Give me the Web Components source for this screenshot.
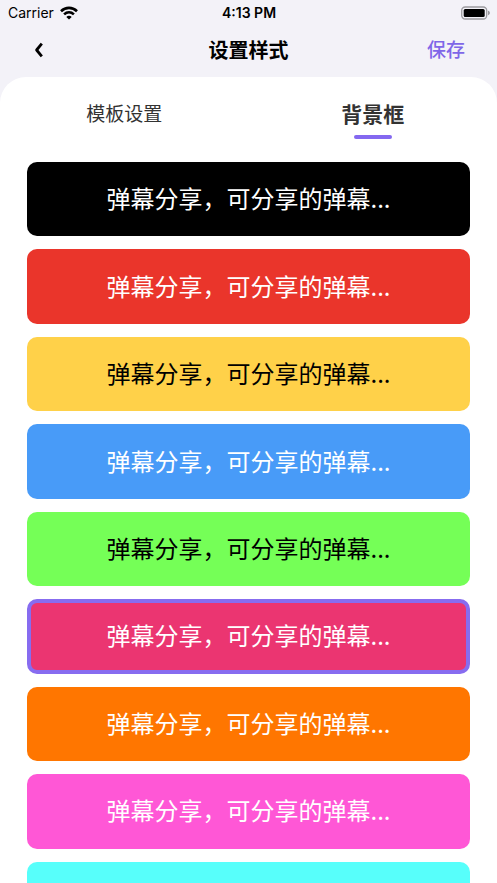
<!DOCTYPE html>
<html lang="zh-CN">
<head>
<meta charset="UTF-8">
<meta name="viewport" content="width=device-width, initial-scale=1">
<title>设置样式</title>
<style>
    body {
        margin: 0;
        background: #f3f2f8;
        font-family: Inter, "Noto Sans CJK SC", sans-serif;
    }
</style>
</head>
<body>
<style-settings></style-settings>

<script>
// Attach an open shadow root and fill it from a template
function render(host, html) {
    const template = document.createElement('template');
    template.innerHTML = html;
    host.attachShadow({ mode: 'open' }).appendChild(template.content.cloneNode(true));
}

// Carrier, clock and battery
class StatusBar extends HTMLElement {
    constructor() {
        super();
        render(this, `
            <style>
                :host {
                    display: grid;
                    grid-template-columns: 1fr auto 1fr;
                    align-items: center;
                    height: 25px;
                    padding: 0 7px 0 8px;
                    font-size: 14px;
                    color: #000;
                }

                .carrier {
                    display: flex;
                    align-items: center;
                    gap: 6px;
                }

                .time {
                    font-weight: 600;
                }

                .battery {
                    justify-self: end;
                }

                svg {
                    display: block;
                }
            </style>
            <div class="carrier">
                <span>Carrier</span>
                <svg width="18" height="14" viewBox="0 0 18 14" fill="none" stroke="#000" stroke-width="2.6" aria-hidden="true">
                    <path d="M1 5.2C5.6 .8 12.4 .8 17 5.2"/>
                    <path d="M4.1 8.4C7 5.7 11 5.7 13.9 8.4"/>
                    <path d="M9 13.6L6.3 10.9C7.8 9.5 10.2 9.5 11.7 10.9Z" fill="#000" stroke="none"/>
                </svg>
            </div>
            <div class="time">4:13 PM</div>
            <svg class="battery" width="30" height="14" viewBox="0 0 30 14" aria-hidden="true">
                <rect x="1.7" y="1" width="25" height="12" rx="3.5" fill="none" stroke="#9c9b9f" stroke-width="1.3"/>
                <rect x="3.7" y="3" width="21" height="8" rx="1.5" fill="#000"/>
                <path d="M28.2 4.8C30.2 5.4 30.2 8.6 28.2 9.2Z" fill="#858489"/>
            </svg>
        `);
    }
}

// Title bar with back and save
class NavBar extends HTMLElement {
    constructor() {
        super();
        render(this, `
            <style>
                :host {
                    display: grid;
                    grid-template-columns: 1fr auto 1fr;
                    align-items: center;
                    height: 52px;
                    padding: 0 32px;
                }

                button {
                    border: 0;
                    padding: 0;
                    background: none;
                    font: inherit;
                    cursor: pointer;
                }

                .back {
                    justify-self: start;
                }

                .save {
                    justify-self: end;
                    font-size: 19px;
                    line-height: 28px;
                    font-weight: 500;
                    color: #7f66e8;
                }

                h1 {
                    margin: 0;
                    font-size: 20px;
                    line-height: 28px;
                    font-weight: 600;
                    color: #000;
                }

                svg {
                    display: block;
                }
            </style>
            <button class="back" type="button" aria-label="返回">
                <svg width="14" height="18" viewBox="0 0 14 18" fill="none" stroke="#000" stroke-width="2.8">
                    <path d="M9.8 1.6L4.6 8L9.8 14.4" stroke-linejoin="round"/>
                </svg>
            </button>
            <h1><slot></slot></h1>
            <button class="save" type="button"><slot name="action"></slot></button>
        `);
    }
}

class TabItem extends HTMLElement {
    constructor() {
        super();
        render(this, `
            <style>
                :host {
                    display: grid;
                    flex: 1;
                }

                button {
                    display: flex;
                    flex-direction: column;
                    align-items: center;
                    border: 0;
                    padding: 21px 0 0;
                    background: none;
                    font: inherit;
                    font-size: 19px;
                    line-height: 34px;
                    color: #333;
                    cursor: pointer;
                }

                button::after {
                    content: "";
                    width: 38px;
                    height: 4px;
                    margin-top: 3px;
                    border-radius: 2px;
                }

                :host([selected]) button {
                    font-size: 21px;
                    font-weight: 600;
                }

                :host([selected]) button::after {
                    background: #8468f0;
                }
            </style>
            <button type="button"><slot></slot></button>
        `);
    }
}

// One selectable background box
class BackgroundCard extends HTMLElement {
    constructor() {
        super();
        render(this, `
            <style>
                :host {
                    display: grid;
                    flex: none;
                    aspect-ratio: 119 / 20;
                    color: #fff;
                }

                :host([dark-text]) {
                    color: #000;
                }

                button {
                    border: 0 solid #876cf0;
                    border-radius: 10px;
                    padding: 0 0 2px;
                    background: var(--fill, #000);
                    color: inherit;
                    font-family: "Noto Sans CJK SC", sans-serif;
                    font-size: 24px;
                    line-height: 28px;
                    cursor: pointer;
                }

                :host([selected]) button {
                    border-width: 4px;
                }
            </style>
            <button type="button"><slot></slot></button>
        `);
    }

    connectedCallback() {
        this.style.setProperty('--fill', this.getAttribute('fill'));
        this.shadowRoot.querySelector('button').setAttribute('aria-pressed', this.hasAttribute('selected'));
    }
}

class StyleSettings extends HTMLElement {
    constructor() {
        super();
        const cards = [
            { fill: '#000000' },
            { fill: '#ea352b' },
            { fill: '#ffd149', dark: true },
            { fill: '#489bf8' },
            { fill: '#75ff57', dark: true },
            { fill: '#eb3571', selected: true },
            { fill: '#ff7600' },
            { fill: '#ff57d6' },
            { fill: '#57fffb', dark: true }
        ];

        render(this, `
            <style>
                :host {
                    display: flex;
                    flex-direction: column;
                    height: 100vh;
                }

                main {
                    display: flex;
                    flex: 1;
                    flex-direction: column;
                    min-height: 0;
                    border-radius: 26px 26px 0 0;
                    background: #fff;
                }

                .tabs {
                    display: flex;
                }

                .list {
                    display: flex;
                    flex: 1;
                    flex-direction: column;
                    gap: 13px;
                    min-height: 0;
                    padding: 23px 27px 0;
                    overflow-y: auto;
                    scrollbar-width: none;
                }
            </style>
            <status-bar></status-bar>
            <nav-bar>设置样式<span slot="action">保存</span></nav-bar>
            <main>
                <div class="tabs">
                    <tab-item>模板设置</tab-item>
                    <tab-item selected>背景框</tab-item>
                </div>
                <div class="list">
                    ${cards.map(card => `
                        <background-card fill="${card.fill}"${card.dark ? ' dark-text' : ''}${card.selected ? ' selected' : ''}>弹幕分享，可分享的弹幕...</background-card>
                    `).join('')}
                </div>
            </main>
        `);
    }
}

customElements.define('status-bar', StatusBar);
customElements.define('nav-bar', NavBar);
customElements.define('tab-item', TabItem);
customElements.define('background-card', BackgroundCard);
customElements.define('style-settings', StyleSettings);
</script>
</body>
</html>
